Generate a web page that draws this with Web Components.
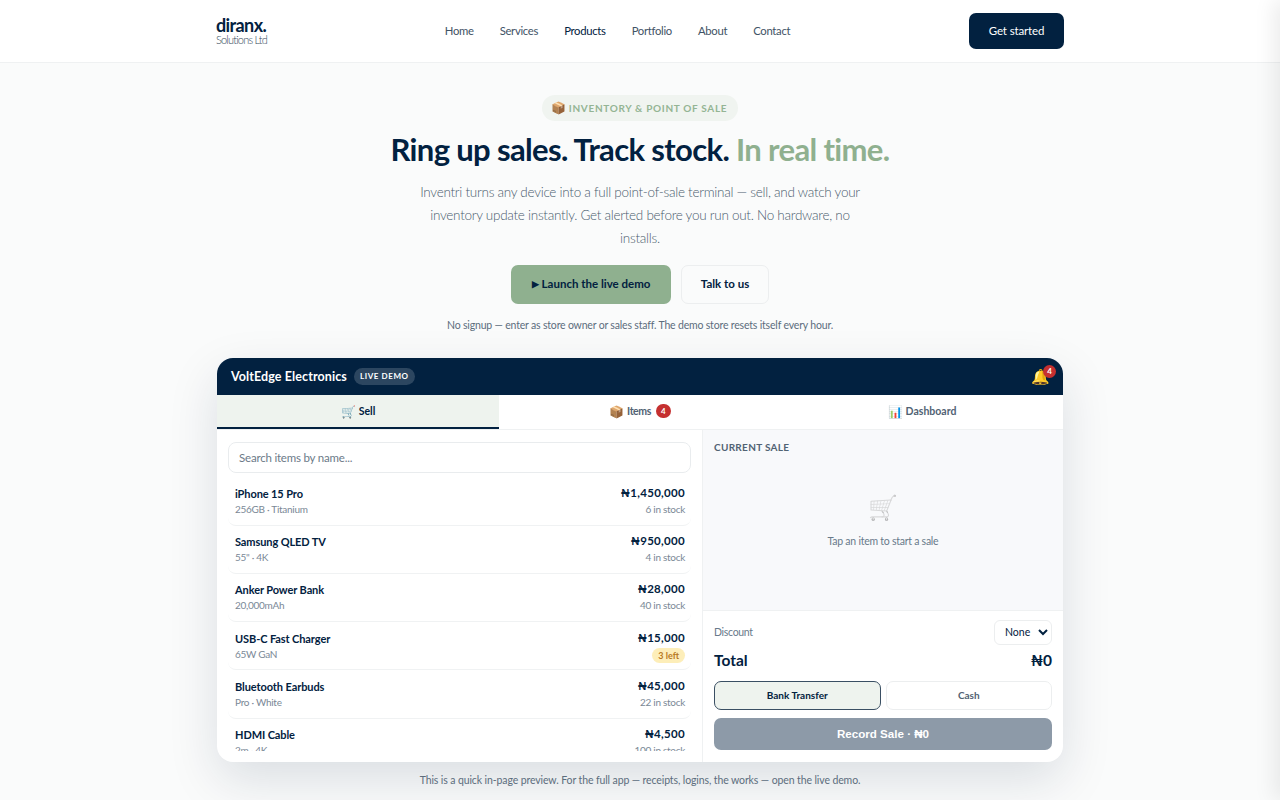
<!DOCTYPE html>
<html lang="en">
<head>
<meta charset="utf-8">
<title>Inventri</title>
<style>
  html, body { margin: 0; height: 800px; overflow: hidden; }
  body { background: #fafbfb; font-family: "Lato", "Noto Sans", sans-serif; color: #022140; }
</style>
</head>
<body>
<site-nav></site-nav>
<hero-block></hero-block>
<pos-demo></pos-demo>
<demo-note>This is a quick in-page preview. For the full app — receipts, logins, the works — open the live demo.</demo-note>
<side-drawer></side-drawer>

<script>
// nav bar
class SiteNav extends HTMLElement {
  constructor() {
    super();
    this.attachShadow({ mode: 'open' });
    this.shadowRoot.innerHTML = `
      <style>
        :host { display: block; background: #fff; border-bottom: 1px solid #eff1f2; }
        .wrap { width: 848px; height: 62px; margin: 0 auto; display: flex; align-items: center; justify-content: space-between; }
        .logo { display: flex; flex-direction: column; width: 60px; color: #022140; margin-top: 2px; }
        .logo b { font-size: 18px; line-height: 15px; font-weight: 700; letter-spacing: -.6px; }
        .logo span { font-size: 11px; line-height: 12px; margin-top: 1px; font-weight: 300; letter-spacing: -.8px; color: #33475a; }
        nav { display: flex; gap: 26px; font-size: 11.3px; letter-spacing: -.3px; color: #3f5366; padding: 0 10px 2px 0; }
        nav a.on { color: #022140; }
        .cta { width: 95px; height: 36px; box-sizing: border-box; padding-bottom: 2px; background: #022140; color: #fff; border-radius: 7px; font-size: 11.5px; letter-spacing: -.15px; display: flex; align-items: center; justify-content: center; }
      </style>
      <div class="wrap">
        <div class="logo"><b>diranx.</b><span>Solutions Ltd</span></div>
        <nav>
          <a>Home</a><a>Services</a><a class="on">Products</a><a>Portfolio</a><a>About</a><a>Contact</a>
        </nav>
        <div class="cta">Get started</div>
      </div>`;
  }
}

// headline + buttons
class HeroBlock extends HTMLElement {
  constructor() {
    super();
    this.attachShadow({ mode: 'open' });
    this.shadowRoot.innerHTML = `
      <style>
        :host { display: flex; flex-direction: column; align-items: center; padding-top: 32px; text-align: center; }
        .pill { height: 26px; width: 196px; box-sizing: border-box; padding: 0 2px 1px 0; border-radius: 13px; background: #f0f4f0; color: #94b494; font-size: 10px; font-weight: 700; letter-spacing: .68px; display: flex; align-items: center; justify-content: center; gap: 3px; }
        .pill i { font-style: normal; font-size: 12px; letter-spacing: 0; }
        h1 { margin: 10px 0 0; font-size: 31px; line-height: 36px; font-weight: 700; letter-spacing: -.65px; color: #022140; }
        h1 em { font-style: normal; color: #8fb08f; }
        p { margin: 14px 0 0; width: 460px; font-size: 13.5px; line-height: 23.2px; font-weight: 300; letter-spacing: -.27px; color: #4a5c6e; }
        .btns { display: flex; gap: 10px; margin-top: 14px; }
        .btn { height: 39px; box-sizing: border-box; border-radius: 7px; font-size: 11.5px; font-weight: 700; display: flex; align-items: center; justify-content: center; gap: 3px; color: #022140; }
        .btn span { font-size: 9px; }
        .go { width: 160px; background: #8fb08f; padding-bottom: 2px; }
        .talk { width: 88px; border: 1px solid #eceeef; padding-bottom: 1px; }
        small { display: block; margin-top: 14px; font-size: 10.5px; line-height: 14px; letter-spacing: -.18px; color: #5c6d7d; }
      </style>
      <div class="pill"><i>📦</i>INVENTORY &amp; POINT OF SALE</div>
      <h1>Ring up sales. Track stock. <em>In real time.</em></h1>
      <p>Inventri turns any device into a full point-of-sale terminal — sell, and watch your inventory update instantly. Get alerted before you run out. No hardware, no installs.</p>
      <div class="btns"><div class="btn go"><span>▶</span>Launch the live demo</div><div class="btn talk">Talk to us</div></div>
      <small>No signup — enter as store owner or sales staff. The demo store resets itself every hour.</small>`;
  }
}

// one row in the item list
class PosItem extends HTMLElement {
  constructor() {
    super();
    this.attachShadow({ mode: 'open' });
    this.shadowRoot.innerHTML = `
      <style>
        :host { display: flex; justify-content: space-between; flex: none; height: 47.3px; padding: 0 6px 0 7px; border-bottom: 1px solid #f0f2f3; border-radius: 8px; }
        .l, .r { display: flex; flex-direction: column; padding-top: 8.5px; }
        .r { align-items: flex-end; padding-top: 7.5px; }
        b { font-size: 11px; line-height: 16px; letter-spacing: -.1px; color: #022140; }
        .r b { font-size: 11.5px; letter-spacing: .3px; }
        span { font-size: 10px; line-height: 15px; letter-spacing: -.28px; color: #7a8896; }
        .r span { margin-top: 1px; }
        .r .warn { margin-top: 2px; font-size: 9px; font-weight: 700; letter-spacing: 0; line-height: 15px; height: 15px; padding: 0 6px; border-radius: 8px; background: #fdeeb9; color: #b7791f; }
      </style>
      <div class="l"><b><slot name="name"></slot></b><span><slot name="sub"></slot></span></div>
      <div class="r"><b><slot name="price"></slot></b><span id="st"><slot name="stock"></slot></span></div>`;
  }
  connectedCallback() {
    if (this.hasAttribute('low')) this.shadowRoot.getElementById('st').className = 'warn';
  }
}

// the in-page app preview
class PosDemo extends HTMLElement {
  constructor() {
    super();
    this.attachShadow({ mode: 'open' });
    const items = [
      ['iPhone 15 Pro', '256GB · Titanium', '₦1,450,000', '6 in stock'],
      ['Samsung QLED TV', '55" · 4K', '₦950,000', '4 in stock'],
      ['Anker Power Bank', '20,000mAh', '₦28,000', '40 in stock'],
      ['USB-C Fast Charger', '65W GaN', '₦15,000', '3 left', 1],
      ['Bluetooth Earbuds', 'Pro · White', '₦45,000', '22 in stock'],
      ['HDMI Cable', '2m · 4K', '₦4,500', '100 in stock']
    ];
    const rows = items.map(i => `
      <pos-item ${i[4] ? 'low' : ''}>
        <span slot="name">${i[0]}</span><span slot="sub">${i[1]}</span>
        <span slot="price">${i[2]}</span><span slot="stock">${i[3]}</span>
      </pos-item>`).join('');
    this.shadowRoot.innerHTML = `
      <style>
        :host { display: block; width: 846px; height: 404px; margin: 26px auto 0; background: #fff; border-radius: 16px; overflow: hidden; box-shadow: 0 18px 50px rgba(2,33,64,.13); }
        .wrapper { height: 100%; display: flex; flex-direction: column; }
        header { height: 37px; flex: none; background: #022140; color: #fff; display: flex; align-items: center; padding: 0 8px 0 14px; }
        header b { font-size: 12.5px; letter-spacing: .1px; }
        .live { margin-left: 7px; height: 17px; padding: 0 6px; border-radius: 9px; background: #2c4660; font-size: 8px; font-weight: 700; letter-spacing: .6px; display: flex; align-items: center; }
        .bell { margin-left: auto; position: relative; font-size: 15px; line-height: 20px; margin-right: 5px; }
        .bell i { position: absolute; top: -1px; right: -6px; width: 13px; height: 13px; border-radius: 50%; background: #c53030; font: 700 8px/13px "Lato", sans-serif; text-align: center; color: #fff; }
        .tabs { display: flex; height: 35px; flex: none; border-bottom: 1px solid #eff1f2; box-sizing: border-box; }
        .tab { flex: 1; display: flex; align-items: center; justify-content: center; gap: 3px; padding-bottom: 1px; font-size: 10.5px; font-weight: 700; color: #516273; }
        .tab.on { background: #eef3ee; color: #022140; box-shadow: inset 0 -2px #022140; }
        .tab i { font-style: normal; font-size: 12px; }
        .tab .tight { letter-spacing: -.4px; }
        .tab u { text-decoration: none; margin-left: 2px; width: 15px; height: 14px; border-radius: 7px; background: #c53030; color: #fff; font-size: 8px; line-height: 14px; text-align: center; }
        .main { flex: 1; display: flex; min-height: 0; }
        .left { width: 486px; flex: none; box-sizing: border-box; border-right: 1px solid #eff1f2; padding: 12px 11px 11px; display: flex; flex-direction: column; }
        .search { height: 31px; flex: none; box-sizing: border-box; border: 1px solid #e9ecee; border-radius: 8px; padding-left: 10px; font-size: 11.5px; line-height: 29px; letter-spacing: -.2px; color: #6c7a88; }
        .list { flex: 1; min-height: 0; margin-top: 4.7px; overflow: hidden; display: flex; flex-direction: column; }
        .right { flex: 1; display: flex; flex-direction: column; }
        .sale { height: 181px; flex: none; box-sizing: border-box; background: #f8f9fb; border-bottom: 1px solid #eff1f2; padding: 11px; }
        .sale h4 { margin: 0; font-size: 10px; line-height: 12px; letter-spacing: .3px; color: #516273; }
        .empty { margin-top: 36px; text-align: center; font-size: 10.5px; letter-spacing: -.25px; color: #68798a; }
        .empty i { display: block; font-style: normal; font-size: 24px; line-height: 36px; filter: grayscale(1); opacity: .4; margin-bottom: 10px; }
        .pay { flex: 1; padding: 9px 11px 12px; display: flex; flex-direction: column; }
        .row { display: flex; justify-content: space-between; align-items: center; }
        .row span { font-size: 10.5px; letter-spacing: -.3px; color: #68798a; }
        select { width: 58px; height: 25px; border: 1px solid #eceeef; border-radius: 6px; background: #fff; color: #022140; font: 10.5px "Lato", sans-serif; padding-left: 6px; }
        .total { margin-top: 3px; height: 24px; font-size: 15.5px; font-weight: 700; color: #022140; }
        .methods { display: flex; gap: 5px; margin-top: 9px; }
        .methods div { flex: 1; height: 29px; box-sizing: border-box; border: 1px solid #eceeef; border-radius: 7px; display: flex; align-items: center; justify-content: center; font-size: 10px; font-weight: 700; color: #516273; }
        .methods .on { background: #eef3ee; border-color: #3a4f63; color: #022140; }
        .rec { margin-top: 8px; height: 32px; border-radius: 7px; background: #8d9aa8; color: #fff; font: 700 11.6px/32px "Liberation Sans", sans-serif; text-align: center; }
      </style>
      <div class="wrapper">
        <header><b>VoltEdge Electronics</b><div class="live">LIVE DEMO</div><div class="bell">🔔<i>4</i></div></header>
        <div class="tabs">
          <div class="tab on"><i>🛒</i>Sell</div>
          <div class="tab"><i>📦</i><span class="tight">Items</span><u>4</u></div>
          <div class="tab"><i>📊</i>Dashboard</div>
        </div>
        <div class="main">
          <div class="left">
            <div class="search">Search items by name...</div>
            <div class="list">${rows}</div>
          </div>
          <div class="right">
            <div class="sale">
              <h4>CURRENT SALE</h4>
              <div class="empty"><i>🛒</i>Tap an item to start a sale</div>
            </div>
            <div class="pay">
              <div class="row"><span>Discount</span><select><option>None</option></select></div>
              <div class="row total"><div>Total</div><div>₦0</div></div>
              <div class="methods"><div class="on">Bank Transfer</div><div>Cash</div></div>
              <div class="rec">Record Sale · ₦0</div>
            </div>
          </div>
        </div>
      </div>`;
  }
}

class SideDrawer extends HTMLElement {
  constructor() {
    super();
    this.attachShadow({ mode: 'open' });
    this.shadowRoot.innerHTML = `
      <style>
        :host { display: block; position: fixed; top: 0; left: 1280px; width: 300px; height: 800px; background: #fff; box-shadow: -6px 0 20px rgba(0,0,0,.08); }
      </style>`;
  }
}

// footnote under the preview
class DemoNote extends HTMLElement {
  constructor() {
    super();
    this.attachShadow({ mode: 'open' });
    this.shadowRoot.innerHTML = `
      <style>
        :host { display: block; margin-top: 11px; text-align: center; font-size: 10.5px; line-height: 14px; letter-spacing: -.11px; color: #5c6d7d; }
      </style>
      <slot></slot>`;
  }
}

customElements.define('site-nav', SiteNav);
customElements.define('hero-block', HeroBlock);
customElements.define('pos-item', PosItem);
customElements.define('pos-demo', PosDemo);
customElements.define('side-drawer', SideDrawer);
customElements.define('demo-note', DemoNote);
</script>
</body>
</html>
